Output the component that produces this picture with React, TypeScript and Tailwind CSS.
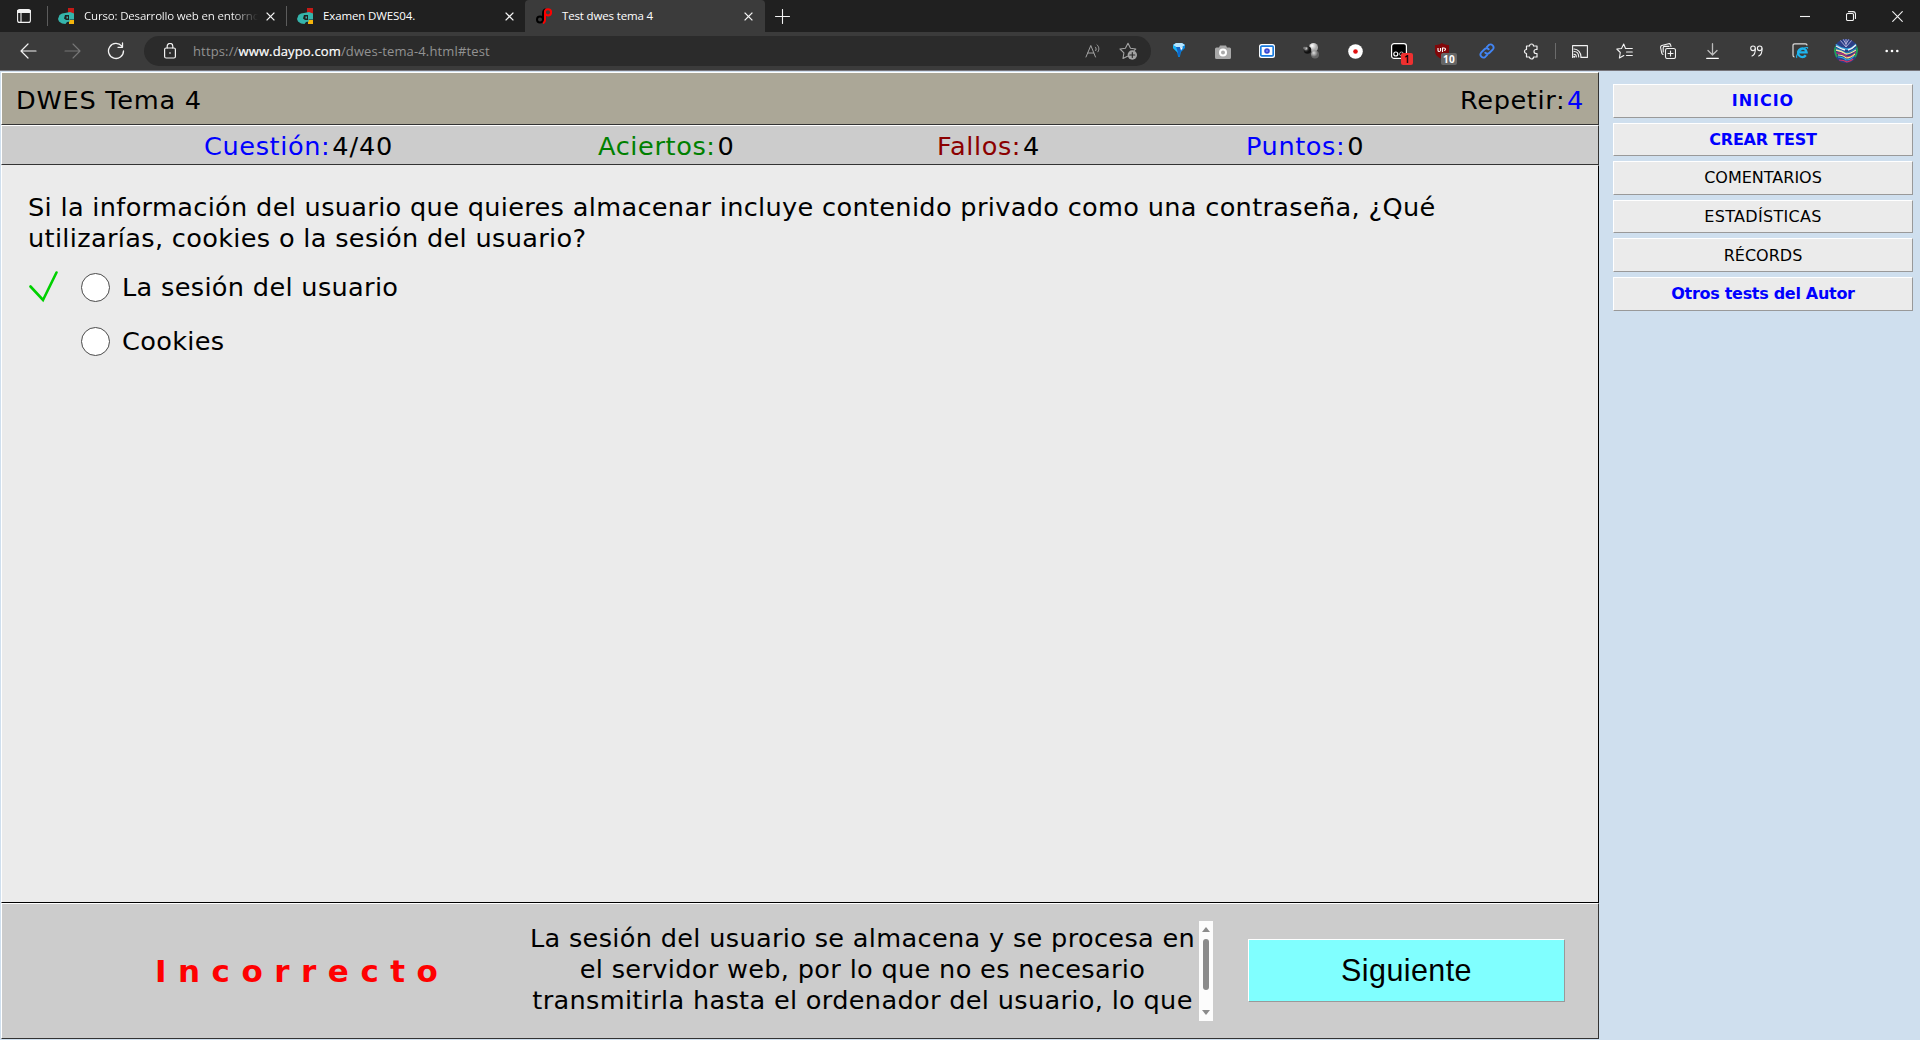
import type { ReactNode } from "react";

const Close = () => (
  <svg width="9" height="9" viewBox="0 0 9 9" stroke="#f4f4f4" strokeWidth="1.3">
    <path d="M.6.6l7.8 7.8M8.4.6L.6 8.4" />
  </svg>
);

const MoodleIcon = () => (
  <svg width="16" height="16" viewBox="0 0 16 16" className="shrink-0">
    <path d="M10 0h6v8h-6z" fill="#c41a16" />
    <path d="M11 12h5v4h-5z" fill="#f5b50c" />
    <path d="M7 5l5-1 4 1.500v6h-4.500l.5 2-3 .5-1.500 2-3.500-.5L1 13.500 0 11l1.500-4L4 5.500z" fill="#35b5ac" />
    <path d="M7 7h4v5H8L6 10.500z" fill="#202020" />
    <path d="M8.500 8.500H10v2H8.500z" fill="#35b5ac" />
  </svg>
);

const DaypoIcon = () => (
  <svg width="16" height="16" viewBox="0 0 16 16" fill="none" className="shrink-0">
    <circle cx="4" cy="11.500" r="3" stroke="#000" strokeWidth="2" />
    <path d="M7 12V5c0-2 .8-3.500 2.500-4" stroke="#000" strokeWidth="1.800" />
    <circle cx="12" cy="4.300" r="3.100" stroke="#f00" strokeWidth="2" />
    <path d="M9 4v8c0 1.800-.8 2.900-2 3.300" stroke="#f00" strokeWidth="2" />
  </svg>
);

const Cell = ({ children }: { children: ReactNode }) => (
  <div className="relative flex h-full w-11 shrink-0 items-center justify-center">{children}</div>
);

const line = { fill: "none", stroke: "#f2f2f2", strokeWidth: 1.1, strokeLinecap: "round", strokeLinejoin: "round" } as const;

function TabStrip() {
  return (
    <div className="flex h-8 items-center bg-[#202020] font-['Open_Sans','Noto_Sans',sans-serif] text-[11.5px] text-white">
      <div className="flex w-[47px] justify-center pl-[1px]">
        <svg width="14" height="14" viewBox="0 0 14 14" {...line}>
          <rect x=".6" y=".6" width="12.800" height="12.800" rx="2" />
          <path d="M1 2.500h12" strokeWidth="3" />
          <path d="M4 3v10" />
        </svg>
      </div>
      <div className="h-5 w-px bg-[#5c5c5c]" />
      <div className="flex w-[238px] items-center pl-[10px]">
        <MoodleIcon />
        <div className="mb-[2px] ml-[10px] w-[174px] whitespace-nowrap bg-gradient-to-r from-white from-85% to-transparent to-100% bg-clip-text tracking-[-0.18px] text-transparent">
          Curso: Desarrollo web en entorno
        </div>
        <div className="ml-[8px]"><Close /></div>
      </div>
      <div className="h-5 w-px bg-[#5c5c5c]" />
      <div className="flex w-[238px] items-center pl-[10px]">
        <MoodleIcon />
        <div className="mb-[2px] ml-[10px] w-[174px] whitespace-nowrap tracking-[-0.12px]">Examen DWES04.</div>
        <div className="ml-[8px]"><Close /></div>
      </div>
      <div className="flex h-8 w-[240px] items-center rounded-t-[4px] bg-[#3b3b3b] pl-[11px]">
        <DaypoIcon />
        <div className="mb-[2px] ml-[10px] w-[174px] whitespace-nowrap tracking-[-0.15px]">Test dwes tema 4</div>
        <div className="ml-[8px]"><Close /></div>
      </div>
      <svg width="15" height="15" viewBox="0 0 15 15" className="ml-[10px]" {...line}>
        <path d="M7.500 .5v14M.5 7.500h14" />
      </svg>
      <div className="ml-auto flex">
        <div className="flex w-[46px] items-center justify-center">
          <svg width="10" height="10" viewBox="0 0 10 10" {...line}><path d="M0 5.500h10" strokeLinecap="butt" /></svg>
        </div>
        <div className="flex w-[46px] items-center justify-center">
          <svg width="10" height="10" viewBox="0 0 10 10" {...line}>
            <rect x=".5" y="2.500" width="7" height="7" rx="1.200" />
            <path d="M2.500 .6H7A2.500 2.500 0 0 1 9.500 3v4.500" />
          </svg>
        </div>
        <div className="flex w-[46px] items-center justify-center">
          <svg width="11" height="11" viewBox="0 0 11 11" {...line}><path d="M.7 .7l9.600 9.600M10.300 .7L.7 10.300" /></svg>
        </div>
      </div>
    </div>
  );
}

function Toolbar() {
  return (
    <div className="flex h-[39px] items-center border-b border-[#77757b] bg-[#3b3b3b]">
      <div className="flex h-full w-[144px] pl-[6px]">
        <Cell>
          <svg width="17" height="16" viewBox="0 0 17 16" {...line} strokeWidth="1.200"><path d="M16 8H1M8 1L1 8l7 7" /></svg>
        </Cell>
        <Cell>
          <svg width="17" height="16" viewBox="0 0 17 16" {...line} stroke="#777"><path d="M1 8h15M9 1l7 7-7 7" /></svg>
        </Cell>
        <Cell>
          <svg width="18" height="18" viewBox="0 0 18 18" {...line} strokeWidth="1.300">
            <path d="M14.800 4.200A7.500 7.500 0 1 0 16.500 9M15.500 1v4.300h-4.500" />
          </svg>
        </Cell>
      </div>
      <div className="flex h-[30px] w-[1007px] items-center rounded-full bg-[#2b2b2b] pl-[20px] font-['Open_Sans','Noto_Sans',sans-serif]">
        <svg width="12" height="16" viewBox="0 0 12 16" {...line} strokeWidth="1.200">
          <rect x=".6" y="5" width="10.800" height="10" rx="1.500" />
          <path d="M3.200 5V3.200a2.800 2.800 0 0 1 5.600 0V5" />
          <circle cx="6" cy="10" r=".8" fill="#fff" stroke="none" />
        </svg>
        <div className="ml-[17px] whitespace-nowrap text-[13px] tracking-[0.14px] text-[#929292]">
          https://<span className="text-white [-webkit-text-stroke:0.2px_white]">www.daypo.com</span>/dwes-tema-4.html#test
        </div>
        <svg width="16" height="16" viewBox="0 0 16 16" className="ml-auto" {...line} stroke="#a3a3a3" strokeWidth="1">
          <path d="M1 14L5.800 2.500 10.500 14M2.800 10h6M10.500 4.200c.8.900.9 2.600.2 3.500M12 1.800c2.300 1.900 2.400 5 .9 7" />
        </svg>
        <svg width="18" height="18" viewBox="0 0 18 18" className="ml-[18px] mr-[14px]" {...line} stroke="#a3a3a3">
          <path d="M8.500 14.200L4 16.500l.9-5.600L1 7l5.400-.8L9 1.300l2.500 4.900 5.300.8-1.500 1.400" />
          <circle cx="13.300" cy="13" r="4.700" fill="#a3a3a3" stroke="none" />
          <path d="M13.300 10.500v5M10.800 13h5" stroke="#2b2b2b" />
        </svg>
      </div>
      <div className="ml-[6px] flex h-full items-center">
        <Cell>
          <svg width="14" height="16" viewBox="0 0 14 16" className="mt-[-2px]">
            <path d="M1 3l3-2h6l3 2v3l-4 4-1.200 5H6.200L5 10 1 6z" fill="#0786de" />
            <path d="M1 3l3-2h6l3 2-3 2H4z" fill="#b6e6ff" />
            <path d="M4 5h6l-3 10z" fill="#1264c8" />
            <path d="M1 3l3 2 2 6-5-5z" fill="#19b5f6" />
            <path d="M8 5l3 .5-2 3z" fill="#fff" />
          </svg>
        </Cell>
        <Cell>
          <svg width="16" height="14" viewBox="0 0 16 14" className="mt-px">
            <path d="M1.500 2.500H4L5 .5h6l1 2h2.500q1.500 0 1.500 1.500v8.500q0 1.500-1.500 1.500h-13Q0 14 0 12.500V4q0-1.500 1.500-1.500z" fill="#a8a8a8" />
            <circle cx="8" cy="7.500" r="3" fill="#aaa" stroke="#fff" strokeWidth="2" />
          </svg>
        </Cell>
        <Cell>
          <svg width="16" height="14" viewBox="0 0 16 14">
            <rect width="16" height="14" rx="2.500" fill="#fff" />
            <rect x="1.800" y="2.200" width="12.400" height="9.600" rx="1" fill="#fff" stroke="#197bdf" strokeWidth="1.700" />
            <circle cx="8" cy="7" r="2.800" fill="#3b49cf" />
            <circle cx="8" cy="7" r="1" fill="#8388ef" />
          </svg>
        </Cell>
        <Cell>
          <svg width="16" height="16" viewBox="0 0 16 16">
            <defs>
              <radialGradient id="dark" cx=".3" cy=".3"><stop stopColor="#eee" /><stop offset=".6" stopColor="#333" /><stop offset="1" stopColor="#111" /></radialGradient>
              <radialGradient id="light" cx=".35" cy=".3"><stop stopColor="#fff" /><stop offset="1" stopColor="#aaa" /></radialGradient>
              <radialGradient id="mid" cx=".35" cy=".3"><stop stopColor="#ddd" /><stop offset="1" stopColor="#666" /></radialGradient>
            </defs>
            <circle cx="10.500" cy="4.500" r="4.500" fill="url(#light)" />
            <circle cx="4.500" cy="7" r="3.800" fill="url(#dark)" />
            <circle cx="12" cy="11.500" r="4" fill="url(#mid)" />
            <circle cx="1.500" cy="5" r="1.300" fill="#777" />
          </svg>
        </Cell>
        <Cell>
          <svg width="15" height="15" viewBox="0 0 15 15"><circle cx="7.500" cy="7.500" r="7.300" fill="#fff" /><circle cx="7.500" cy="7.500" r="2.300" fill="#e01010" /></svg>
        </Cell>
        <Cell>
          <svg width="16" height="16" viewBox="0 0 16 16" fill="none" stroke="#fff">
            <rect x=".6" y=".6" width="14.800" height="14.800" rx="2.500" fill="#000" strokeWidth="1.200" />
            <circle cx="4.800" cy="11" r="2" strokeWidth="1.200" />
            <circle cx="10.500" cy="11" r="2" strokeWidth=".9" stroke="#bbb" />
          </svg>
          <span className="absolute left-[24px] top-[21px] flex h-3 w-3 items-center justify-center rounded-[2px] bg-[#ee3030] font-['Open_Sans',sans-serif] text-[10px] font-semibold text-black">1</span>
        </Cell>
        <Cell>
          <svg width="14" height="16" viewBox="0 0 14 16" className="mr-[2px]">
            <path d="M7 0c2 1.500 4.500 2 7 2v6c0 4-3 6.500-7 8-4-1.500-7-4-7-8V2c2.500 0 5-.5 7-2z" fill="#810709" />
            <path d="M3 5v2.500q0 1 1.200 1T5.500 7.500V5M7.500 9V5H9q1.500 0 1.500 1.200T9 7.500" fill="none" stroke="#fff" strokeWidth="1.100" />
          </svg>
          <span className="absolute left-[20px] top-[21px] flex h-3 w-4 items-center justify-center rounded-[2px] bg-[#666] font-['Open_Sans',sans-serif] text-[10px] font-bold text-white">10</span>
        </Cell>
        <Cell>
          <svg width="16" height="16" viewBox="0 0 16 16" fill="none" stroke="#4285f4" strokeWidth="1.900" strokeLinecap="round">
            <path d="M6.300 9.700a3 3 0 0 0 4.200 0l3.400-3.400a3 3 0 0 0-4.200-4.200L8 3.800M9.700 6.300a3 3 0 0 0-4.200 0L2.100 9.700a3 3 0 0 0 4.200 4.200L8 12.200" />
          </svg>
        </Cell>
        <Cell>
          <svg width="16" height="17" viewBox="0 0 16 17" {...line} strokeWidth="1.200">
            <path d="M4 3h2.500a2 2 0 0 1 4 0H14v3.500h-1a2 2 0 0 0 0 4h1V14h-3.500a2 2 0 0 1-4 0H3.500v-3.500a2 2 0 1 1 0-4V3z" />
          </svg>
        </Cell>
        <div className="ml-[2px] mr-[2px] h-4 w-px bg-[#6b6b6b]" />
        <Cell>
          <svg width="16" height="13" viewBox="0 0 16 13" {...line}>
            <path d="M.6.6h14.800v11.800H9M.6.6v11.800" />
            <path d="M2 4c4 0 7 3.500 7 8M2 6.500c3 0 4.700 2.500 4.700 5.500M2 9.300c1.500 0 2.300 1.200 2.300 2.700" />
            <circle cx="2.200" cy="11.700" r=".5" />
          </svg>
        </Cell>
        <Cell>
          <svg width="17" height="16" viewBox="0 0 17 16" {...line}>
            <path d="M9.500 5.500L7.700 1 5.500 5.500.8 6l3.500 3.500-.9 5.500 4.400-2.500M9.500 5.500h6.800M10.500 9h5.800M10.500 12.500h5.800" />
          </svg>
        </Cell>
        <Cell>
          <svg width="16" height="16" viewBox="0 0 16 16" {...line}>
            <rect x="5.500" y="5.500" width="10" height="10" rx="1.800" />
            <path d="M10.500 8v5M8 10.500h5M3 11.500Q2 11 1.700 10L.6 4.500Q.4 3 1.800 2.500L8.500 .7q1.500-.3 2 1L11 3.500M3.200 9V4.700q0-1.300 1.300-1.300H9" />
          </svg>
        </Cell>
        <Cell>
          <svg width="13" height="16" viewBox="0 0 13 16" {...line} stroke="#bbb" strokeWidth="1.300">
            <path d="M6.500 .7v11M2 7.500l4.500 4.500L11 7.500" />
            <path d="M.7 15.300h11.600" stroke="#fff" />
          </svg>
        </Cell>
        <Cell>
          <svg width="13" height="12" viewBox="0 0 13 12" {...line}>
            <circle cx="3" cy="3.300" r="2.300" /><path d="M5.300 3.500c.2 3.500-1 6.500-3.300 7.500" />
            <circle cx="9.700" cy="3.300" r="2.300" /><path d="M12 3.500c.2 3.500-1 6.500-3.300 7.500" />
          </svg>
        </Cell>
        <Cell>
          <svg width="17" height="16" viewBox="0 0 17 16" fill="none">
            <path d="M15 2.500Q15 .8 13.300 .8H2.700Q1 .8 1 2.500v9.800Q1 14 2.500 14" stroke="#ddd" strokeWidth="1.200" />
            <path d="M13.800 12.300a4.300 4.300 0 1 1 .8-3H7" stroke="#1eb4ee" strokeWidth="2.300" />
            <path d="M5 14.800c-1.500-1.500 2-8 8-10 2.500-.8 3-.2 2.500 1" stroke="#1eb4ee" strokeWidth="1.100" />
          </svg>
        </Cell>
        <div className="flex w-12 justify-center">
          <svg width="24" height="24" viewBox="0 0 24 24" fill="none">
            <defs><clipPath id="avatar"><circle cx="12" cy="12" r="12" /></clipPath></defs>
            <g clipPath="url(#avatar)">
              <path d="M0 0h24v24H0z" fill="#2c3f86" />
              <path d="M1 5q5 4 11 5t11-6" stroke="#35a9e0" strokeWidth="1.500" />
              <path d="M6 1l6 7 6-7M9 0l3 5 3-5M12 0v8" stroke="#b9b6dc" strokeWidth=".9" />
              <path d="M2 7q5 3 9 4M22 6q-4 4-8 5" stroke="#f0f2f4" strokeWidth="1.400" />
              <path d="M1 9q6 2 11 5 5-1 11-5" stroke="#168bb8" strokeWidth="1.200" />
              <path d="M2 11q6 1 10 4 4 0 10-4" stroke="#f5dfa0" strokeWidth="1.400" />
              <path d="M2 14q8 0 11 4 5 0 9-5" stroke="#b52d77" strokeWidth="1.400" />
              <path d="M4 16q5 0 8 3 5 0 9-4" stroke="#f0e984" strokeWidth="1.100" />
              <path d="M4 18q5 0 8 3 5 0 8-4" stroke="#27aee8" strokeWidth="1.200" />
              <path d="M5 21q5 0 8 2 4-1 6-3" stroke="#dc3560" strokeWidth="1.200" />
              <path d="M1 7q-1 6 2 11M23 7q1 6-2 11" stroke="#20a650" strokeWidth="1.700" />
            </g>
          </svg>
        </div>
        <Cell>
          <svg width="14" height="4" viewBox="0 0 14 4" fill="#fff"><circle cx="1.700" cy="2" r="1.300" /><circle cx="7" cy="2" r="1.300" /><circle cx="12.300" cy="2" r="1.300" /></svg>
        </Cell>
      </div>
    </div>
  );
}

const Stat = ({ label, value, color }: { label: string; value: string; color: string }) => (
  <div className="flex whitespace-nowrap tracking-[0.6px]"><span className={color}>{label}</span><span className="ml-[2px] tracking-[0.9px]">{value}</span></div>
);

const Option = ({ text, correct }: { text: string; correct?: boolean }) => (
  <div className="flex h-[54px] items-center">
    <div className="w-[53px]">
      {correct && (
        <svg width="30" height="32" viewBox="0 0 30 32" fill="none" stroke="#00d000" strokeWidth="2.600" strokeLinecap="round"><path d="M2.500 15.500L15 29 28.500 1.500" /></svg>
      )}
    </div>
    <div className="h-[29px] w-[29px] rounded-full border border-[#4a4a4a] bg-white" />
    <span className="ml-[12px] pt-px">{text}</span>
  </div>
);

const menu = [
  { text: "INICIO", style: "font-bold text-[#0000ff] tracking-[0.95px]" },
  { text: "CREAR TEST", style: "font-bold text-[#0000ff] tracking-[-0.2px]" },
  { text: "COMENTARIOS", style: "text-black" },
  { text: "ESTADÍSTICAS", style: "text-black tracking-[0.3px]" },
  { text: "RÉCORDS", style: "text-black" },
  { text: "Otros tests del Autor", style: "font-bold text-[#0000ff] tracking-[-0.3px]" },
];

export default function App() {
  return (
    <div className="flex h-[1040px] w-[1920px] flex-col overflow-hidden bg-[#cfdfee] font-['DejaVu_Sans',sans-serif] text-[25.6px] leading-[31px] tracking-[0.32px] text-black">
      <TabStrip />
      <Toolbar />
      <div className="flex flex-1 pt-px">
        <main className="ml-px flex h-[967px] w-[1598px] flex-col">
          <header className="flex h-[53px] items-center justify-between border border-b-[#333] border-l-white border-r-[#333] border-t-white bg-[#aba797] pl-[14px] pr-[14px] pt-[3px]">
            <span className="tracking-[0.75px]">DWES Tema 4</span>
            <span className="tracking-[0.6px]">Repetir:<span className="ml-[2px] text-[#0000ff]">4</span></span>
          </header>
          <section className="flex h-[40px] items-center border border-b-[#333] border-l-white border-r-[#333] border-t-white bg-[#cccccc] pl-[202px] pt-[3px]">
            <div className="w-[394px]"><Stat label="Cuestión:" value="4/40" color="text-[#0000ff]" /></div>
            <div className="w-[339px]"><Stat label="Aciertos:" value="0" color="text-[#008000]" /></div>
            <div className="w-[309px]"><Stat label="Fallos:" value="4" color="text-[#8b0000]" /></div>
            <Stat label="Puntos:" value="0" color="text-[#0000ff]" />
          </section>
          <section className="flex-1 border border-b-black border-l-white border-r-black border-t-transparent bg-[#ebebeb] pl-[26px] pt-[26px]">
            <p className="whitespace-nowrap">
              Si la información del usuario que quieres almacenar incluye contenido privado como una contraseña, ¿Qué
              <br />
              utilizarías, cookies o la sesión del usuario?
            </p>
            <div className="mt-[6px]">
              <Option text="La sesión del usuario" correct />
              <Option text="Cookies" />
            </div>
          </section>
          <footer className="flex h-[136px] border border-b-[#333] border-l-white border-r-[#333] border-t-white bg-[#cccccc]">
            <div className="w-[523px] pl-[153px] pt-[51px] text-[31px] font-bold leading-[32px] tracking-[11.5px] text-[#ff0000]">Incorrecto</div>
            <div className="mt-[17px] flex h-[100px] w-[688px]">
              <p className="w-[674px] whitespace-nowrap pl-px pt-[2px] text-center">
                La sesión del usuario se almacena y se procesa en
                <br />
                el servidor web, por lo que no es necesario
                <br />
                transmitirla hasta el ordenador del usuario, lo que
              </p>
              <div className="flex w-[14px] shrink-0 flex-col items-center bg-[#fcfcfc]">
                <svg width="8" height="5" viewBox="0 0 8 5" className="mt-[6px]"><path d="M4 0l4 5H0z" fill="#8b8b8b" /></svg>
                <div className="mt-[7px] h-[51px] w-[6px] rounded-full bg-[#8b8b8b]" />
                <svg width="8" height="5" viewBox="0 0 8 5" className="mt-[20px]"><path d="M4 5l4-5H0z" fill="#8b8b8b" /></svg>
              </div>
            </div>
            <button className="ml-[35px] mt-[35px] h-[63px] w-[317px] border border-b-[#999] border-l-white border-r-[#999] border-t-white bg-[#80ffff] font-['Liberation_Sans',Arial,sans-serif] text-[30.5px] tracking-[0.4px]">
              Siguiente
            </button>
          </footer>
        </main>
        <nav className="ml-[14px] mt-[12px] flex w-[300px] flex-col gap-[5px] tracking-normal">
          {menu.map((m) => (
            <button
              key={m.text}
              className={
                "h-[33.6px] shrink-0 border border-b-[#999] border-l-white border-r-[#999] border-t-white bg-[#ebebeb] pt-px text-[16px] leading-[20px] " +
                m.style
              }
            >
              {m.text}
            </button>
          ))}
        </nav>
      </div>
    </div>
  );
}
